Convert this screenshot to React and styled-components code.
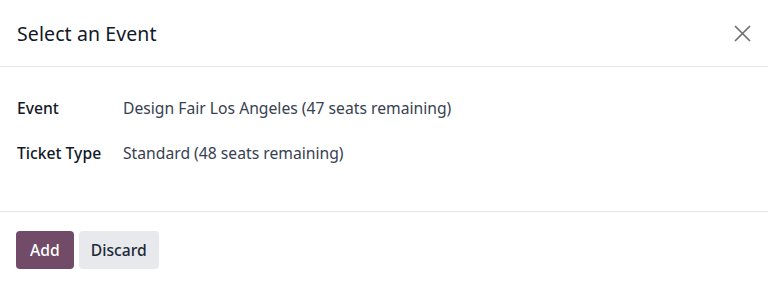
import React from "react";
import styled, { createGlobalStyle } from "styled-components";

const Global = createGlobalStyle`
  html, body { margin: 0; padding: 0; background: #fff; }
  body { font-family: "Noto Sans", "Open Sans", sans-serif; color: #374151; }
`;

const Dialog = styled.div`
  width: 768px;
  display: flex;
  flex-direction: column;
  background: #fff;
`;

const Header = styled.header`
  flex-shrink: 0;
  height: 66px;
  display: flex;
  align-items: center;
  justify-content: space-between;
  padding: 0 16px 0 17px;
  border-bottom: 1px solid #e4e5e7;
`;

const Title = styled.h4`
  margin: 0;
  font-size: 19.5px;
  font-weight: 400;
  color: #111827;
  letter-spacing: 0.1px;
`;

const Close = styled.button`
  border: 0;
  background: none;
  padding: 0;
  width: 20px;
  height: 20px;
  display: flex;
  align-items: center;
  justify-content: center;
  cursor: pointer;
`;

const Body = styled.main`
  flex-shrink: 0;
  box-sizing: border-box;
  height: 145px;
  padding: 18px 16px 0 17px;
  border-bottom: 1px solid #e4e5e7;
`;

const Row = styled.div`
  display: grid;
  grid-template-columns: 106px 1fr;
  align-items: center;
  height: 45px;
  font-size: 15.7px;
`;

const Label = styled.span`
  font-weight: 500;
  color: #111827;
`;

const Value = styled.span`
  color: #374151;
`;

const Footer = styled.footer`
  display: flex;
  gap: 5px;
  padding: 19px 16px;
`;

const Button = styled.button`
  height: 38px;
  padding: 0 ${(p) => (p.$primary ? "14px" : "12px")};
  border: 0;
  border-radius: 4px;
  font-family: inherit;
  font-size: 15.7px;
  font-weight: 500;
  background: ${(p) => (p.$primary ? "#714B67" : "#E7E9ED")};
  color: ${(p) => (p.$primary ? "#fff" : "#1f2937")};
  cursor: pointer;
`;

export default function App() {
  return (
    <>
      <Global />
      <Dialog>
        <Header>
          <Title>Select an Event</Title>
          <Close aria-label="Close">
            <svg width="17" height="17" viewBox="0 0 17 17">
              <path d="M1 1L16 16M16 1L1 16" stroke="#6b6b6b" strokeWidth="1.6" />
            </svg>
          </Close>
        </Header>
        <Body>
          <Row>
            <Label>Event</Label>
            <Value>Design Fair Los Angeles (47 seats remaining)</Value>
          </Row>
          <Row>
            <Label>Ticket Type</Label>
            <Value>Standard (48 seats remaining)</Value>
          </Row>
        </Body>
        <Footer>
          <Button $primary>Add</Button>
          <Button>Discard</Button>
        </Footer>
      </Dialog>
    </>
  );
}
